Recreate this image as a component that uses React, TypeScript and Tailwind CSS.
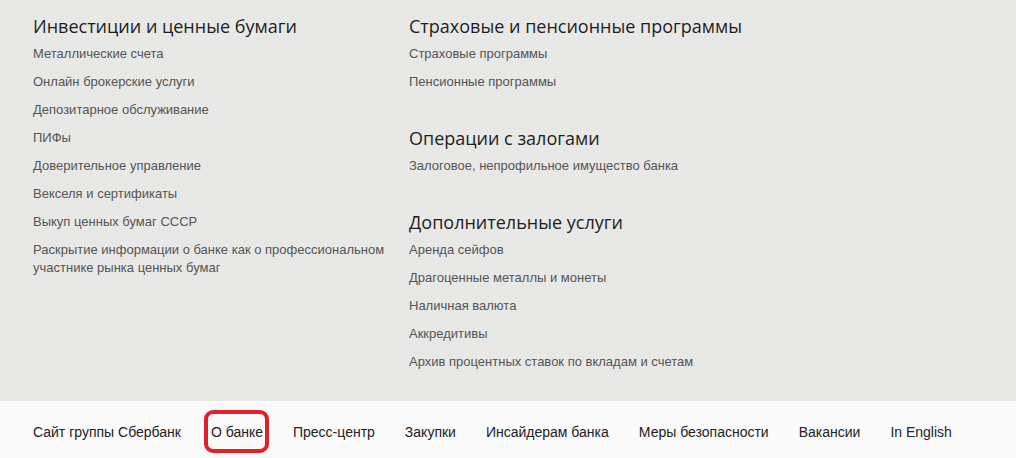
import React from 'react';

type Section = { title: string; links: string[] };

const leftSections: Section[] = [
  {
    title: 'Инвестиции и ценные бумаги',
    links: [
      'Металлические счета',
      'Онлайн брокерские услуги',
      'Депозитарное обслуживание',
      'ПИФы',
      'Доверительное управление',
      'Векселя и сертификаты',
      'Выкуп ценных бумаг СССР',
      'Раскрытие информации о банке как о профессиональном участнике рынка ценных бумаг',
    ],
  },
];

const rightSections: Section[] = [
  {
    title: 'Страховые и пенсионные программы',
    links: ['Страховые программы', 'Пенсионные программы'],
  },
  {
    title: 'Операции с залогами',
    links: ['Залоговое, непрофильное имущество банка'],
  },
  {
    title: 'Дополнительные услуги',
    links: [
      'Аренда сейфов',
      'Драгоценные металлы и монеты',
      'Наличная валюта',
      'Аккредитивы',
      'Архив процентных ставок по вкладам и счетам',
    ],
  },
];

const footerLinks = [
  'Сайт группы Сбербанк',
  'О банке',
  'Пресс-центр',
  'Закупки',
  'Инсайдерам банка',
  'Меры безопасности',
  'Вакансии',
  'In English',
];

function MenuSection({ section }: { section: Section }) {
  return (
    <div>
      <h3 className="font-['Open_Sans',sans-serif] text-[18px] leading-[28px] text-[#1e1e1e] font-normal">
        {section.title}
      </h3>
      <ul>
        {section.links.map((link) => (
          <li key={link} className="py-[5px]">
            <a href="#" className="text-[13px] leading-[18px] text-[#555] block">
              {link}
            </a>
          </li>
        ))}
      </ul>
    </div>
  );
}

export default function App() {
  return (
    <div className="w-[1016px] h-[458px] overflow-hidden font-['Liberation_Sans',Arial,sans-serif]">
      <div className="bg-[#e8e8e7] h-[401px] pt-[12px] pl-[33px] flex">
        <div className="w-[376px] pr-[16px] flex flex-col gap-[28px]">
          {leftSections.map((s) => (
            <MenuSection key={s.title} section={s} />
          ))}
        </div>
        <div className="w-[376px] flex flex-col gap-[28px]">
          {rightSections.map((s) => (
            <MenuSection key={s.title} section={s} />
          ))}
        </div>
      </div>
      <div className="bg-[#fafafa] h-[57px] pl-[33px] pt-[22px]">
        <ul className="flex gap-[30px] text-[14px] leading-[18px] text-[#222]">
          {footerLinks.map((link) => (
            <li key={link} className="relative">
              <a href="#">{link}</a>
              {link === 'О банке' && (
                <span className="absolute -left-[7px] -right-[6px] -top-[13px] -bottom-[12px] border-[4px] border-[#e1212a] rounded-[9px]" />
              )}
            </li>
          ))}
        </ul>
      </div>
    </div>
  );
}
